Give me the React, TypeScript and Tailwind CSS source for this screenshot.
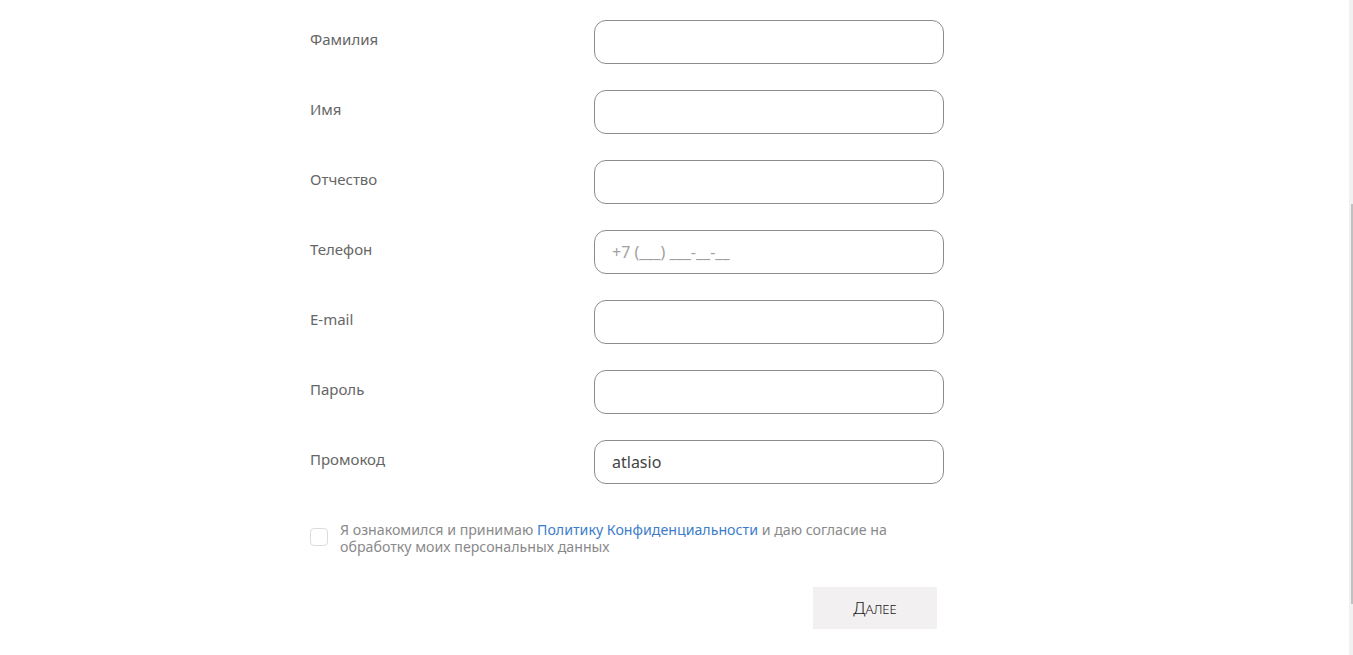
import React from 'react';

interface Field {
  id: string;
  label: string;
  placeholder?: string;
  value?: string;
}

const fields: Field[] = [
  { id: 'last-name', label: 'Фамилия' },
  { id: 'first-name', label: 'Имя' },
  { id: 'middle-name', label: 'Отчество' },
  { id: 'phone', label: 'Телефон', placeholder: '+7 (___) ___-__-__' },
  { id: 'email', label: 'E-mail' },
  { id: 'password', label: 'Пароль' },
  { id: 'promo', label: 'Промокод', value: 'atlasio' },
];

const App = () => {
  return (
    <div className="min-h-screen bg-white font-['Noto_Sans','Open_Sans',sans-serif]">
      <div className="w-[733px] mx-auto pt-[20px]">
        <div className="flex flex-col gap-[26px]">
          {fields.map((field) => (
            <div key={field.id} className="flex">
              <label
                htmlFor={field.id}
                className="w-[284px] pt-[9px] text-[15px] leading-[20px] text-[#666666]"
              >
                {field.label}
              </label>
              <input
                id={field.id}
                defaultValue={field.value}
                placeholder={field.placeholder}
                className="w-[350px] h-[44px] rounded-[12px] border border-[#8c8c8c] px-[17px] text-[16px] text-[#444444] placeholder:text-[#a0a0a0] outline-none"
              />
            </div>
          ))}
        </div>

        <div className="flex mt-[37px] w-[634px]">
          <div className="w-[18px] h-[18px] mt-[7px] shrink-0 rounded-[4px] border border-[#dcdcdc] bg-white" />
          <p className="ml-[12px] w-[560px] text-[14.2px] leading-[17px] text-[#8a8a8a]">
            Я ознакомился и принимаю{' '}
            <a href="#" className="text-[#3d7dca]">
              Политику Конфиденциальности
            </a>{' '}
            и даю согласие на обработку моих персональных данных
          </p>
        </div>

        <div className="mt-[32px] ml-[503px]">
          <button className="w-[124px] h-[42px] bg-[#f2f0f0] text-[#1a1a1a] font-light">
            <span className="text-[17px]">Д</span>
            <span className="text-[13px]">АЛЕЕ</span>
          </button>
        </div>
      </div>

      {/* thin scrollbar on the right edge */}
      <div className="fixed top-0 right-0 w-[4px] h-full bg-[#f1f1f1]">
        <div className="absolute right-0 top-[204px] w-[2px] h-[400px] bg-[#c1c1c1]" />
      </div>
    </div>
  );
};

export default App;
